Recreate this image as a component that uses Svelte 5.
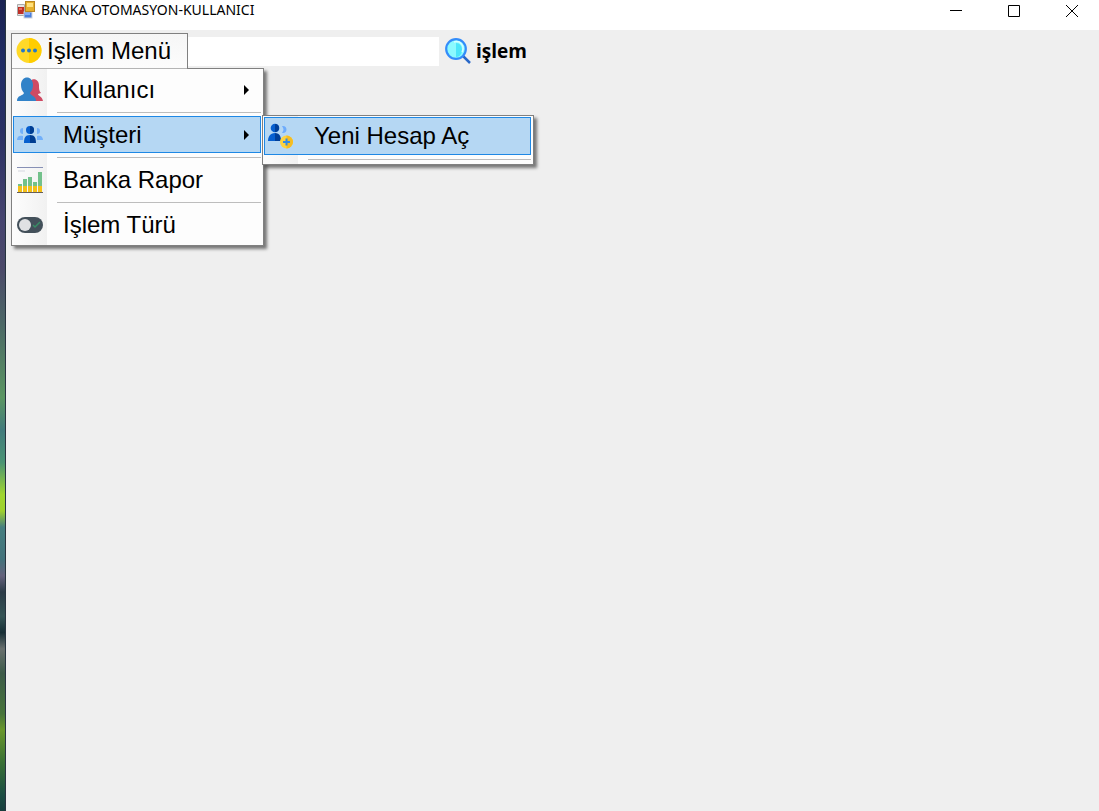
<script>
  let query = $state('');
  const entries = [
    { id: 'user', label: 'Kullanıcı', arrow: true },
    { id: 'customer', label: 'Müşteri', arrow: true, open: true },
    { id: 'report', label: 'Banka Rapor' },
    { id: 'type', label: 'İşlem Türü' }
  ];
</script>

{#snippet icon(name)}
  <svg class="icon" viewBox="0 0 26 26" aria-hidden="true">
    {#if name === 'user'}
      <path fill="#cf4a63" d="M13 4c4-4 9-1 9 4 0 4 0 6 2 8l-3 1c0 2 4 2 5 7H12z" />
      <path fill="#3182c8" d="M0 24c0-6 6-5 7-8-2-2-3-5-3-8 0-10 12-10 12 0 0 3-1 6-3 8 1 3 6 3 6 8z" />
    {:else if name === 'customer'}
      <g fill="#72b0fa">
        <path d="M6 6a3 3 0 1 0 0 6zM20 6a3 3 0 1 1 0 6z" />
        <path d="M0 18c0-4 3-5 6-4v4zM26 18c0-4-3-5-6-4v4z" />
      </g>
      <circle cx="13" cy="8" r="4" fill="#075fce" />
      <path fill="#003d91" d="M13 4a4 4 0 0 1 0 8zM13 13c5 0 6 3 6 8h-6z" />
      <path fill="#075fce" d="M13 13c-5 0-6 3-6 8h6z" />
    {:else if name === 'report'}
      <path fill="#8790b5" d="M0 0h26v1H0z" />
      <path fill="#e7e8ec" d="M1 3h7v2H1z" />
      <path fill="#73c18b" d="M1 17h4v3H1zM6 12h4v8H6zM11 10h4v10h-4zM16 15h4v5h-4zM21 5h4v15h-4z" />
      <path fill="#f4c019" d="M1 19h4v6H1zM6 19h4v6H6zM11 19h4v6h-4zM16 19h4v6h-4zM21 19h4v6h-4z" />
      <path fill="#665e58" d="M0 25h26v1H0z" />
    {:else if name === 'type'}
      <rect y="5" width="26" height="16" rx="8" fill="#43505a" />
      <circle cx="8" cy="13" r="6" fill="#e0e1e3" />
      <path d="m16 13 2 2 5-5" fill="none" stroke="#388d65" stroke-width="1.5" />
    {:else if name === 'account'}
      <path fill="#6eacfc" d="M14 3c6-1 6 8 0 7 2-3 2-4 0-7z" />
      <circle cx="7" cy="5" r="4.3" fill="#0760d0" />
      <path fill="#003f98" d="M7 1a4 4 0 0 1 0 8zM7 10c5 0 6 4 6 8H7z" />
      <path fill="#0760d0" d="M7 10c-5 0-7 4-7 8h7z" />
      <circle cx="18.5" cy="19" r="6.5" fill="#ffd33d" />
      <path fill="#f5bd22" d="M18.500 12.500a6.500 6.500 0 0 1 0 13z" />
      <path d="M18.500 15.500v7M15 19h7" stroke="#348be0" stroke-width="2" />
    {:else if name === 'dots'}
      <circle cx="13" cy="12.500" r="12.5" fill="#ffd928" />
      <path fill="#ffcd00" d="M13 0a12.500 12.500 0 0 1 0 25z" />
      <g fill="#2478c8"><circle cx="7" cy="12.500" r="2" /><circle cx="13" cy="12.500" r="2" /><circle cx="19" cy="12.500" r="2" /></g>
    {:else if name === 'search'}
      <path d="m18 18 7 7" stroke="#2968c8" stroke-width="2.500" />
      <circle cx="11" cy="11" r="9.800" fill="#8cfaff" stroke="#338cfa" stroke-width="2.200" />
      <path fill="#4de6fa" d="M11 5c8 0 8 14 0 14z" />
      <path d="M9 4c7-2 11 5 8 10" fill="none" stroke="#d5ffff" stroke-width="1.500" />
    {/if}
  </svg>
{/snippet}

<div class="desktop">
  <div class="wallpaper"></div>
  <main class="window">
    <header class="titlebar">
      <svg class="app-icon" viewBox="0 0 18 18" aria-hidden="true">
        <path fill="#e4e4e4" stroke="#aaa" d="M.5 3.500h7v11h-7z" />
        <rect x="1" y="6" width="6" height="7" fill="#bf3027" />
        <path fill="#e96b5f" d="M2 7h3v2H2z" />
        <rect x="7" y="11" width="8" height="6" fill="#4a7edb" stroke="#d0d4dd" />
        <path fill="#82aafa" d="M8 12h5v2H8z" />
        <rect x="8.500" y=".5" width="9" height="10" fill="#e7b12d" stroke="#b98622" />
        <path fill="#ffe07c" d="M10 2h6v4h-6z" />
      </svg>
      <h1>BANKA OTOMASYON-KULLANICI</h1>
      <div class="controls">
        <button aria-label="Simge durumuna küçült"><svg viewBox="0 0 14 14"><path d="M1 6.500h12" /></svg></button>
        <button aria-label="Ekranı kapla"><svg viewBox="0 0 14 14"><path d="M1.500 1.500h11v11h-11z" /></svg></button>
        <button aria-label="Kapat"><svg viewBox="0 0 14 14"><path d="m1 1 12 12M13 1 1 13" /></svg></button>
      </div>
    </header>

    <nav class="toolbar">
      <div class="menu-root">
        <button class="menu-title">{@render icon('dots')}<span>İşlem Menü</span></button>
        <ul class="menu">
          {#each entries as entry, i (entry.id)}
            {#if i > 0}<li class="line" role="separator"></li>{/if}
            <li class="entry">
              <button class="item" class:selected={entry.open}>
                {@render icon(entry.id)}
                <span class="label">{entry.label}</span>
                {#if entry.arrow}<span class="arrow"></span>{/if}
              </button>
              {#if entry.open}
                <ul class="menu submenu">
                  <li><button class="item selected">{@render icon('account')}<span class="label">Yeni Hesap Aç</span></button></li>
                  <li class="line" role="separator"></li>
                </ul>
              {/if}
            </li>
          {/each}
        </ul>
      </div>
      <input type="text" aria-label="işlem ara" bind:value={query} />
      <button class="search">{@render icon('search')}<span>işlem</span></button>
    </nav>
  </main>
</div>

<style>
  :global(body) { margin: 0; background: #efefef; }
  button { border: 0; padding: 0; background: none; color: #000; font: inherit; }
  ul { list-style: none; margin: 0; }
  .desktop {
    display: grid;
    grid-template-columns: 6px minmax(0, 1fr);
    min-height: 100vh;
    font-family: "Liberation Sans", Arial, sans-serif;
    color: #000;
  }
  .wallpaper {
    box-sizing: border-box;
    border-right: 1px solid #26343f;
    background: linear-gradient(#1b2352 0%, #202d66 9%, #292f62 16%, #45446f 27%, #4b4969 33%, #4c6866 40%, #5b9662 49%, #427b7c 53%, #4a9474 57%, #a0d62f 61%, #9fd12d 63%, #467f80 65%, #43727b 69%, #64627c 71%, #2b3b47 73%, #355455 76%, #172f36 78%, #69706e 80%, #3d5b49 83%, #47743a 88%, #69972b 90%, #397034 94%, #1b4d42 98%, #173e3d 100%);
  }
  .window { background: #efefef; }
  .titlebar {
    display: flex;
    align-items: center;
    height: 20px;
    padding: 0 20px 10px 11px;
    background: #fff;
  }
  .app-icon { width: 18px; height: 18px; }
  h1 {
    margin: 0 auto 0 6px;
    font: 400 14px/20px "Noto Sans", "Open Sans", sans-serif;
    white-space: nowrap;
  }
  .controls { display: flex; gap: 44px; padding-top: 2px; }
  .controls button, .controls svg { display: block; width: 14px; height: 14px; }
  .controls path { fill: none; stroke: #000; stroke-width: 1; }
  .toolbar { display: flex; align-items: center; padding: 3px 5px; }
  .icon { display: block; flex: none; width: 26px; height: 26px; }
  .menu-root { position: relative; }
  .menu-title {
    box-sizing: border-box;
    display: flex;
    align-items: center;
    gap: 5px;
    width: 177px;
    height: 36px;
    padding-left: 4px;
    border: 1px solid #808080;
    border-bottom-color: #b4b4b4;
    background: linear-gradient(#f6f6f6, #fcfcfc);
    font-size: 24px;
    line-height: 28px;
    white-space: nowrap;
  }
  .menu {
    position: absolute;
    z-index: 1;
    top: 35px;
    left: 0;
    box-sizing: border-box;
    width: 253px;
    padding: 2px 2px 2px 1px;
    border: 1px solid #808080;
    background: linear-gradient(90deg, #fcfcfc 2px, #f1f1f1 35px, #fdfdfd 35px);
    box-shadow: 3px 3px 3px rgb(0 0 0 / 50%);
  }
  .menu::before {
    content: "";
    position: absolute;
    top: -1px;
    left: 0;
    width: 175px;
    height: 1px;
    background: #b4b4b4;
  }
  .submenu::before { display: none; }
  .entry { position: relative; }
  .item {
    box-sizing: border-box;
    display: flex;
    align-items: center;
    width: 100%;
    height: 37px;
    padding: 0 11px 0 3px;
    border: 1px solid transparent;
    font-size: 24px;
    line-height: 28px;
    text-align: left;
    white-space: nowrap;
  }
  .selected { border-color: #1e88e5; background: #b5d7f3; }
  .label { flex: 1; margin-left: 20px; }
  .arrow { border: 5px solid transparent; border-left-color: #000; border-right: 0; }
  .line { height: 8px; background: linear-gradient(#bdbdbd, #bdbdbd) 44px 4px / 100% 1px no-repeat; }
  .submenu {
    top: -1px;
    left: 249px;
    width: 272px;
    padding: 1px 2px 1px 1px;
  }
  .submenu .item { height: 38px; }
  input {
    box-sizing: border-box;
    width: 251px;
    height: 29px;
    padding: 0 4px;
    border: 0;
    background: #fff;
    font-size: 20px;
  }
  .search {
    display: flex;
    align-items: center;
    gap: 5px;
    margin-left: 6px;
    font: 700 19px/28px "Open Sans", "Noto Sans", sans-serif;
  }
</style>
